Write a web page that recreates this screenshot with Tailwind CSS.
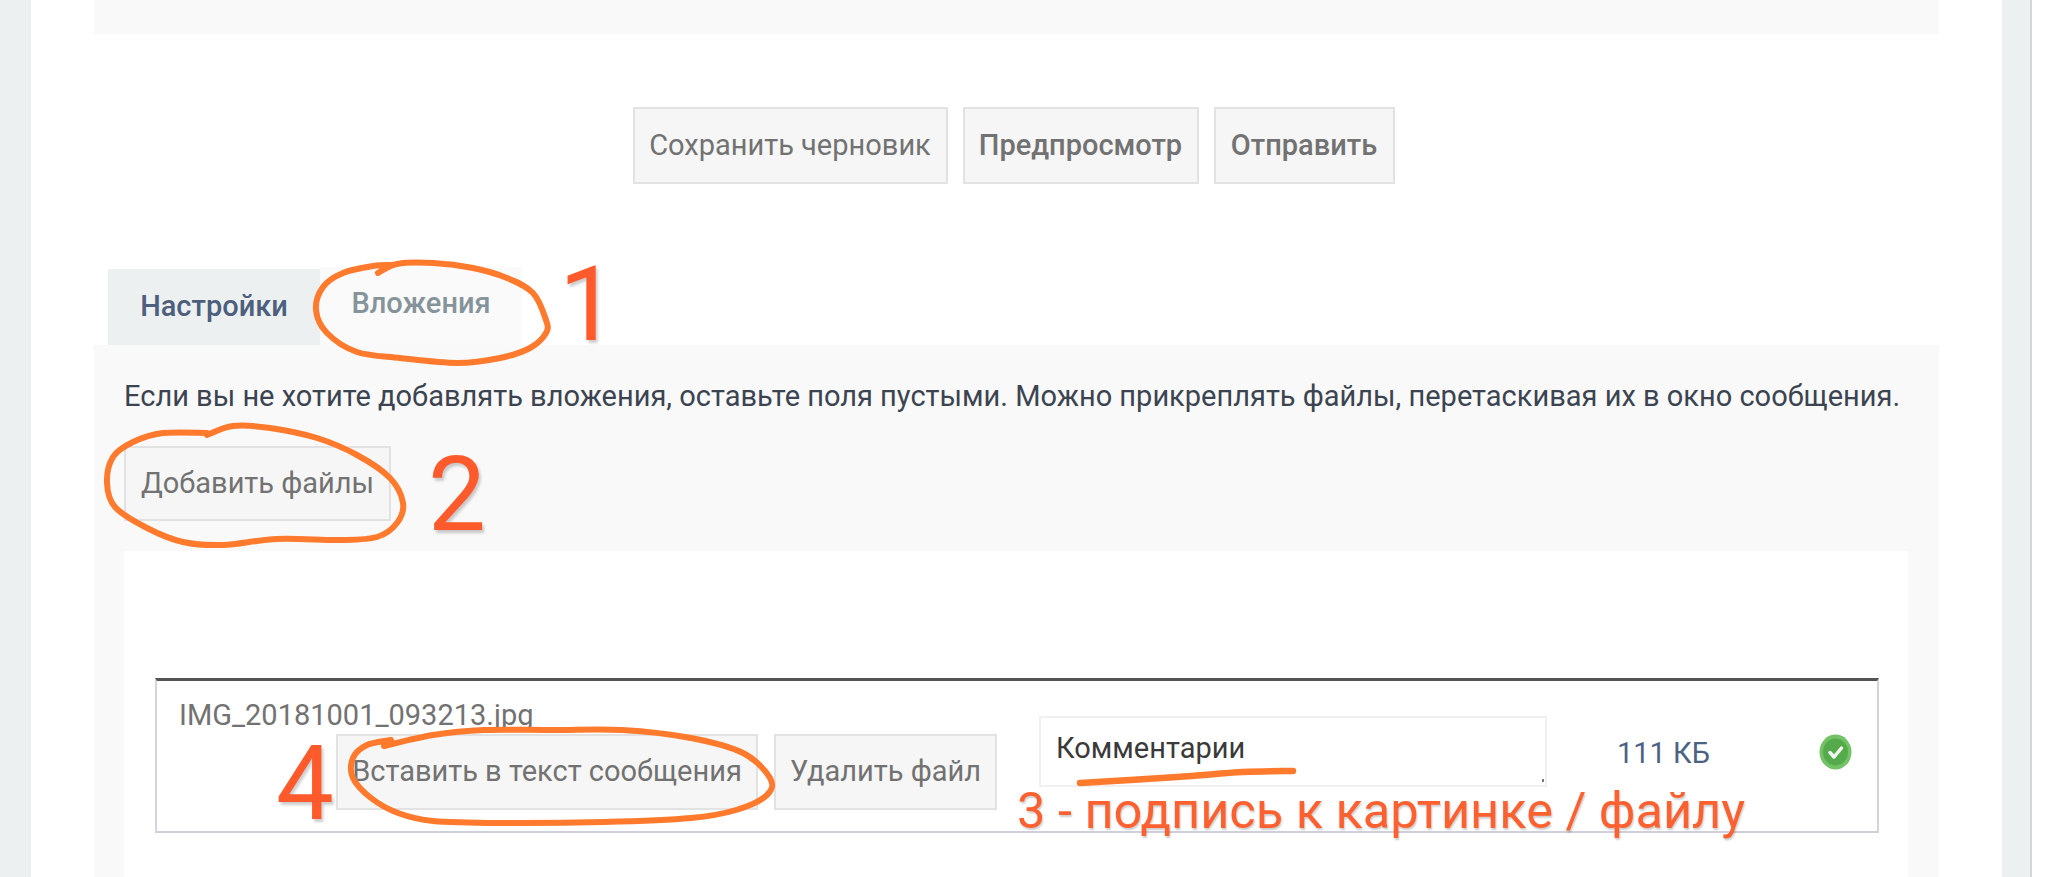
<!DOCTYPE html>
<html lang="ru">
<head>
    <meta charset="UTF-8">
    <meta name="viewport" content="width=device-width,initial-scale=1">
    <title>Вложения</title>
    <script src="https://cdn.jsdelivr.net/npm/@tailwindcss/browser@4"></script>
</head>
<body class="relative h-[877px] overflow-hidden bg-white font-['Roboto',sans-serif]">
<div class="flex h-full">
    <div class="w-[31px] shrink-0 bg-[#ecf0f1]"></div>

    <main class="w-[1971px] shrink-0 bg-white px-[63px]">
        <div class="h-[34px] bg-[#f9f9f9]"></div>

        <div class="mt-[73px] flex justify-center gap-[15px] pr-[6px]">
            <button class="h-[77px] w-[315px] border-2 border-[#e2e2e2] bg-[#f6f6f6] text-[29px] text-[#727272]">Сохранить черновик</button>
            <button class="h-[77px] w-[236px] border-2 border-[#e2e2e2] bg-[#f6f6f6] text-[29px] font-medium text-[#727272]">Предпросмотр</button>
            <button class="h-[77px] w-[181px] border-2 border-[#e2e2e2] bg-[#f6f6f6] text-[29px] font-medium text-[#727272]">Отправить</button>
        </div>

        <div class="mt-[83px] flex items-end pl-[14px]">
            <div class="flex h-[76px] w-[212px] items-center justify-center bg-[#ecf0f1] text-[29px] font-medium text-[#4d5f7c]">Настройки</div>
            <div class="flex h-[78px] w-[202px] justify-center bg-[#fafafa] pt-[18px] text-[29px] font-medium leading-[36px] text-[#85949b]">Вложения</div>
        </div>

        <section class="h-[532px] bg-[#f9f9f9] pl-[30px] pr-[31px]">
            <p class="whitespace-nowrap pt-[33px] text-[29px] leading-[36px] text-[#3b4450]">Если вы не хотите добавлять вложения, оставьте поля пустыми. Можно прикреплять файлы, перетаскивая их в окно сообщения.</p>
            <button class="mt-[32px] h-[75px] w-[267px] border-2 border-[#e2e2e2] bg-[#f6f6f6] text-[29px] text-[#727272]">Добавить файлы</button>

            <div class="mt-[30px] h-[326px] bg-white pl-[31px] pr-[29px] pt-[127px]">
                <div class="flex h-[155px] border-x-2 border-t-[3px] border-b-2 border-x-[#d4d4de] border-t-[#555555] border-b-[#d0d0dc]">
                    <div class="w-[864px] shrink-0 pl-[22px] pr-[24px] pt-[17px]">
                        <div class="text-[29px] leading-[34px] text-[#727272]">IMG_20181001_093213.jpg</div>
                        <div class="mt-[2px] flex justify-end gap-[16px]">
                            <button class="h-[76px] w-[422px] border-2 border-[#e2e2e2] bg-[#f6f6f6] text-[29px] text-[#727272]">Вставить в текст сообщения</button>
                            <button class="h-[76px] w-[223px] border-2 border-[#e2e2e2] bg-[#f6f6f6] text-[29px] text-[#727272]">Удалить файл</button>
                        </div>
                    </div>
                    <div class="relative ml-[18px] mt-[35px] h-[71px] w-[508px] shrink-0">
                        <textarea class="block h-[71px] w-full resize-none border-2 border-[#f0f0f0] bg-white px-[15px] pt-[13px] text-[29px] leading-[34px] text-[#3a3a3a]">Комментарии</textarea>
                        <div class="absolute bottom-[5px] right-[3px] h-[3px] w-[2px] bg-[#777777]"></div>
                    </div>
                    <div class="ml-[70px] w-[202px] shrink-0 pt-[54px] text-[29px] leading-[36px] text-[#4d6283]">111 КБ</div>
                    <div class="pt-[53px]">
                        <svg class="block" width="33" height="36" viewBox="0 0 33 36">
                            <ellipse cx="16.5" cy="18" rx="16" ry="17.5" fill="#74c266"/>
                            <ellipse cx="16.5" cy="18" rx="12.5" ry="13.5" fill="#55ab4b"/>
                            <path d="M11 18.5l4 4.5L22.5 14" fill="none" stroke="#f2f8f0" stroke-width="3.5" stroke-linecap="round" stroke-linejoin="round"/>
                        </svg>
                    </div>
                </div>
            </div>
        </section>
    </main>

    <div class="w-[28px] shrink-0 bg-[#ecf0f1]"></div>
    <div class="w-[2px] shrink-0 bg-[#d3d6d7]"></div>
</div>

<!-- пометки поверх скриншота -->
<svg class="pointer-events-none absolute left-0 top-0" width="2050" height="877" viewBox="0 0 2050 877" fill="none" stroke="#ff7a2d" stroke-width="6" stroke-linecap="round" stroke-linejoin="round">
    <path data-p="378,273 397,264 433,263 473,268 507,278 533,293 546,320 546,333 530,348 500,358 457,363 400,358 357,352 327,333 316,310 323,287 343,273 373,266 393,265"/>
    <path data-p="207,435 233,426 270,428 317,438 357,455 390,478 403,503 397,523 377,537 340,540 277,539 223,545 183,542 147,528 115,507 107,483 113,457 133,442 163,433 207,433"/>
    <path data-p="384,746 433,735 484,730 553,730 622,730 691,738 743,753 770,778 767,795 736,810 691,818 604,822 501,823 433,821 398,813 371,798 353,778 353,758 367,745 391,740"/>
    <path data-p="1080,783 1177,777 1243,772 1293,771" stroke-width="6.5"/>
</svg>
<span class="absolute left-[559px] top-[253px] text-[103px] leading-none text-[#ff5a2c] [text-shadow:2px_3px_3px_rgba(0,0,0,0.2)]">1</span>
<span class="absolute left-[428px] top-[443px] text-[103px] leading-none text-[#ff5a2c] [text-shadow:2px_3px_3px_rgba(0,0,0,0.2)]">2</span>
<span class="absolute left-[276px] top-[732px] text-[103px] leading-none text-[#ff5a2c] [text-shadow:2px_3px_3px_rgba(0,0,0,0.2)]">4</span>
<span class="absolute left-[1017px] top-[786px] whitespace-nowrap text-[50.5px] leading-none text-[#ff6030] [text-shadow:1px_2px_2px_rgba(0,0,0,0.2)]">3 - подпись к картинке / файлу</span>

<script>
    // линия через все точки (Catmull-Rom в кубические кривые)
    document.querySelectorAll('path[data-p]').forEach(el => {
        const p = el.dataset.p.split(' ').map(s => s.split(',').map(Number));
        let d = `M${p[0]}`;
        for (let i = 0; i < p.length - 1; i++) {
            const a = p[i - 1] || p[i], b = p[i], c = p[i + 1], e = p[i + 2] || c;
            d += ` C${b[0] + (c[0] - a[0]) / 6},${b[1] + (c[1] - a[1]) / 6} ${c[0] - (e[0] - b[0]) / 6},${c[1] - (e[1] - b[1]) / 6} ${c[0]},${c[1]}`;
        }
        el.setAttribute('d', d);
    });
</script>
</body>
</html>
